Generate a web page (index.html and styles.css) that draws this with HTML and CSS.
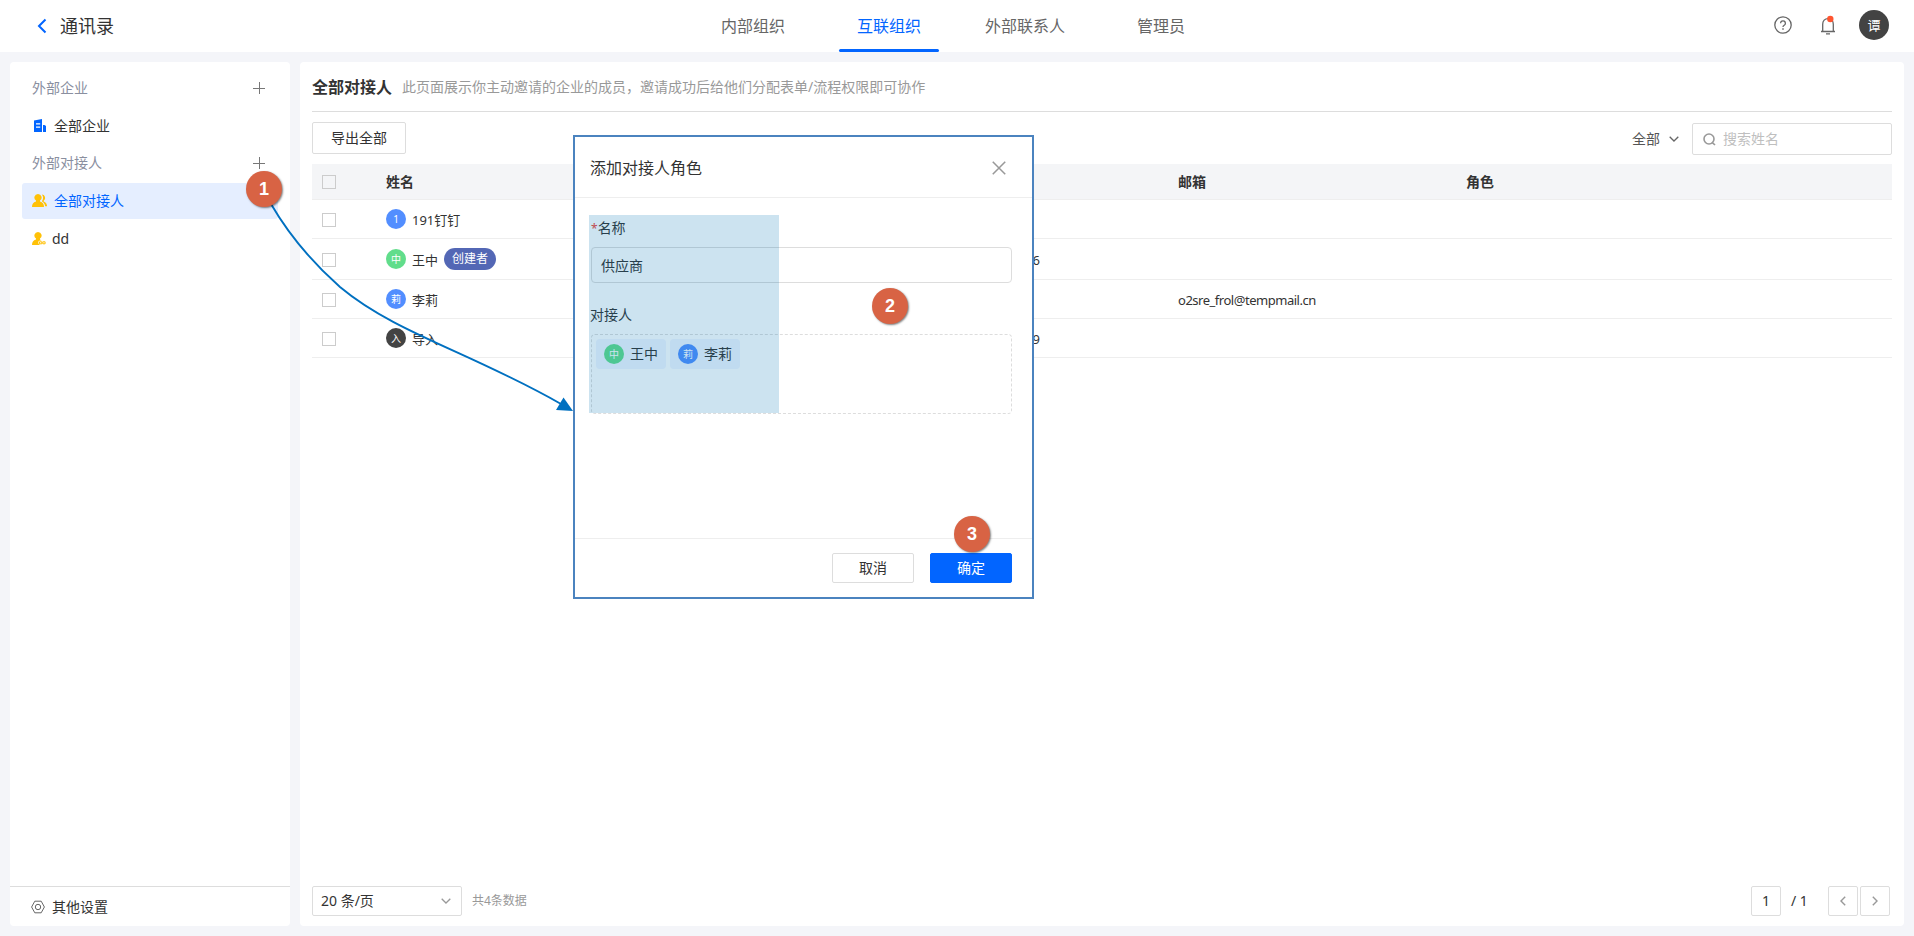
FILE: index.html
```html
<!DOCTYPE html>
<html lang="zh-CN">
<head>
    <meta charset="UTF-8">
    <meta name="viewport" content="width=device-width, initial-scale=1.0">
    <title>通讯录</title>
    <link rel="stylesheet" href="styles.css">
</head>
<body>
    <!-- Header -->
    <header class="header">
        <div class="header-left">
            <svg class="back" width="10" height="16" viewBox="0 0 10 16"><path d="M8.5 1.5L2 8l6.500 6.500" fill="none" stroke="#0265ff" stroke-width="2"/></svg>
            <span class="header-title">通讯录</span>
        </div>
        <nav class="tabs">
            <a class="tab">内部组织</a>
            <a class="tab active">互联组织</a>
            <a class="tab">外部联系人</a>
            <a class="tab">管理员</a>
        </nav>
        <div class="header-right">
            <svg width="18" height="18" viewBox="0 0 18 18" fill="none" stroke="#666">
                <circle cx="9" cy="9" r="8.200" stroke-width="1.300"/>
                <path d="M6.600 7.200a2.400 2.400 0 1 1 3.600 2.100c-.8.5-1.200.8-1.200 1.700" stroke-width="1.300"/>
                <path d="M9 12.200v1.500" stroke-width="1.500"/>
            </svg>
            <svg class="bell" width="16" height="20" viewBox="0 0 16 20" fill="none" stroke="#666" stroke-width="1.300">
                <path d="M1 16.500h14M2.700 16.500V9.200C2.700 5.800 4.800 3.600 8 3.600s5.300 2.200 5.300 5.600v7.300M6 18.800h4"/>
                <circle cx="10.300" cy="4" r="3.200" fill="#ff5530" stroke="none"/>
            </svg>
            <span class="user">谭</span>
        </div>
    </header>

    <div class="page">
        <!-- Sidebar -->
        <aside class="sidebar">
            <div class="side-list">
                <div class="side-label">外部企业
                    <svg width="12" height="12" viewBox="0 0 12 12"><path d="M0 6.500h12M6.500 0v12" stroke="#777" fill="none"/></svg>
                </div>
                <div class="side-item">
                    <svg width="16" height="14" viewBox="0 0 16 14"><path d="M2 1.500L10 0v13H2z" fill="#0265ff"/><path d="M11 6h1.500l1.500 1v6h-3z" fill="#0265ff"/><path d="M4 4.800h4.200M4 8.200h4.200" stroke="#fff" stroke-width="1.300"/></svg>
                    <span>全部企业</span>
                </div>
                <div class="side-label">外部对接人
                    <svg width="12" height="12" viewBox="0 0 12 12"><path d="M0 6.500h12M6.500 0v12" stroke="#777" fill="none"/></svg>
                </div>
                <div class="side-item active">
                    <svg width="16" height="14" viewBox="0 0 16 14" fill="#ffc107"><path d="M6 0a3.600 3.600 0 0 1 2 6.600v1C10.800 8.500 12 10 12 13H0c0-3 1.200-4.500 4-5.400v-1A3.600 3.600 0 0 1 6 0z"/><path d="M9.800.5a3.400 3.400 0 0 1 1.900 6.200v.8c2.100.8 3.300 2.500 3.400 4.800h-1.900c-.3-2.200-1.400-3.700-3.200-4.700V7c1.500-1.600 1.500-4.600-.2-6.500z"/></svg>
                    <span>全部对接人</span>
                </div>
                <div class="side-item role">
                    <svg width="14" height="14" viewBox="0 0 14 14"><path d="M6 0a3.600 3.600 0 0 1 2 6.600v1l1.600.9H8.200c-2.400 0-2.600 3.700 0 4.500H0c0-3 1.200-4.500 4-5.400v-1A3.600 3.600 0 0 1 6 0z" fill="#ffc107"/><path d="M7.500 9.800h2.300v2H7.500zM10.800 9.800h2.300v2h-2.300z" fill="none" stroke="#ffc107"/></svg>
                    <span>dd</span>
                </div>
            </div>
            <div class="side-footer">
                <svg width="14" height="14" viewBox="0 0 14 14" fill="none" stroke="#666"><path d="M3.800 1.200h6.400L13.400 7l-3.200 5.800H3.800L.6 7z"/><circle cx="7" cy="7" r="2.700"/></svg>
                <span>其他设置</span>
            </div>
        </aside>

        <!-- Member list -->
        <main class="main">
            <div class="main-head">
                <h1>全部对接人</h1>
                <p>此页面展示你主动邀请的企业的成员，邀请成功后给他们分配表单/流程权限即可协作</p>
            </div>
            <div class="toolbar">
                <button class="btn export">导出全部</button>
                <div class="filter">全部
                    <svg width="10" height="6" viewBox="0 0 10 6"><path d="M.7.700L5 5 9.300.700" fill="none" stroke="#666" stroke-width="1.300"/></svg>
                </div>
                <div class="search">
                    <svg width="13" height="13" viewBox="0 0 13 13" fill="none" stroke="#999" stroke-width="1.600"><circle cx="6" cy="6" r="5"/><path d="M9 9.300l3 2.700"/></svg>
                    <span>搜索姓名</span>
                </div>
            </div>
            <table>
                <tr>
                    <th class="col-check"><span class="checkbox"></span></th>
                    <th class="col-name">姓名</th>
                    <th class="col-phone"></th>
                    <th class="col-mail">邮箱</th>
                    <th>角色</th>
                </tr>
                <tr>
                    <td><span class="checkbox"></span></td>
                    <td><div class="name"><span class="avatar blue">1</span>191钉钉</div></td>
                    <td></td>
                    <td></td>
                    <td></td>
                </tr>
                <tr class="tall">
                    <td><span class="checkbox"></span></td>
                    <td><div class="name"><span class="avatar green">中</span>王中<span class="tag">创建者</span></div></td>
                    <td class="phone">66</td>
                    <td></td>
                    <td></td>
                </tr>
                <tr>
                    <td><span class="checkbox"></span></td>
                    <td><div class="name"><span class="avatar blue">莉</span>李莉</div></td>
                    <td></td>
                    <td class="mail">o2sre_frol@tempmail.cn</td>
                    <td></td>
                </tr>
                <tr>
                    <td><span class="checkbox"></span></td>
                    <td><div class="name"><span class="avatar dark">入</span>导入</div></td>
                    <td class="phone">09</td>
                    <td></td>
                    <td></td>
                </tr>
            </table>
            <div class="pager">
                <div class="page-size">20 条/页
                    <svg width="10" height="6" viewBox="0 0 10 6"><path d="M.7.700L5 5 9.300.700" fill="none" stroke="#999" stroke-width="1.300"/></svg>
                </div>
                <span class="total">共4条数据</span>
                <span class="page-box">1</span>
                <span class="page-count">/ 1</span>
                <span class="page-box prev"><svg width="6" height="10" viewBox="0 0 6 10"><path d="M5.200.800L1 5l4.200 4.200" fill="none" stroke="#999" stroke-width="1.400"/></svg></span>
                <span class="page-box"><svg width="6" height="10" viewBox="0 0 6 10"><path d="M.8.800L5 5 .8 9.200" fill="none" stroke="#999" stroke-width="1.400"/></svg></span>
            </div>
        </main>
    </div>

    <!-- Add role dialog -->
    <div class="dialog">
        <div class="dialog-head">
            <span>添加对接人角色</span>
            <svg width="14" height="14" viewBox="0 0 13 13"><path d="M.7.700l11.600 11.600M12.300.700L.7 12.300" stroke="#999" stroke-width="1.400" fill="none"/></svg>
        </div>
        <div class="dialog-body">
            <label class="label"><i>*</i>名称</label>
            <div class="input">供应商</div>
            <label class="label second">对接人</label>
            <div class="picker">
                <span class="chip"><span class="avatar green">中</span>王中</span>
                <span class="chip"><span class="avatar strong">莉</span>李莉</span>
            </div>
            <div class="highlight"></div>
        </div>
        <div class="dialog-foot">
            <button class="btn">取消</button>
            <button class="btn primary">确定</button>
        </div>
    </div>

    <!-- Step markers -->
    <svg class="arrow" width="310" height="220" viewBox="270 200 310 220">
        <path d="M271 204C285 228 305 256 340 287C395 333 470 352 561 404" fill="none" stroke="#0070c0" stroke-width="1.900"/>
        <path d="M563.500 397.500L556 410L573 411z" fill="#0070c0"/>
    </svg>
    <div class="step step-1">1</div>
    <div class="step step-2">2</div>
    <div class="step step-3">3</div>
</body>
</html>
```
FILE: styles.css
```css
* {
    box-sizing: border-box;
}
body {
    margin: 0;
    height: 936px;
    overflow: hidden;
    position: relative;
    display: flex;
    flex-direction: column;
    background: #f4f5f9;
    color: #333;
    font-family: "Noto Sans", "Noto Sans CJK SC", sans-serif;
    font-size: 14px;
    line-height: 20px;
}
svg {
    display: block;
    flex: none;
}

/* header */
.header {
    height: 52px;
    flex: none;
    background: #fff;
    display: grid;
    grid-template-columns: 1fr 544px 1fr;
}
.header-left {
    display: flex;
    align-items: center;
    gap: 13px;
    padding-left: 37px;
}
.header-title {
    font-size: 18px;
}
.tabs {
    display: flex;
}
.tab {
    width: 136px;
    display: flex;
    flex-direction: column;
    align-items: center;
    padding-top: 16px;
    font-size: 16px;
    color: #666;
}
.tab.active {
    color: #0265ff;
}
.tab.active::after {
    content: "";
    width: 100px;
    height: 3px;
    margin-top: 13px;
    border-radius: 2px;
    background: #0265ff;
}
.header-right {
    display: flex;
    align-items: center;
    justify-content: flex-end;
    padding: 0 25px 2px 0;
}
.bell {
    margin: 0 23px 0 28px;
}
.user {
    width: 30px;
    height: 30px;
    border-radius: 50%;
    background: #434343;
    color: #fff;
    font-size: 13px;
    line-height: 30px;
    text-align: center;
}

.page {
    flex: 1;
    display: flex;
    gap: 10px;
    padding: 10px;
}

/* sidebar */
.sidebar {
    width: 280px;
    display: flex;
    flex-direction: column;
    background: #fff;
    border-radius: 4px;
}
.side-list {
    flex: 1;
    padding: 8px 12px;
    display: flex;
    flex-direction: column;
    gap: 1.500px;
}
.side-label {
    height: 36px;
    display: flex;
    align-items: center;
    justify-content: space-between;
    padding: 0 13px 0 10px;
    color: #8a8f9f;
}
.side-item {
    height: 36px;
    display: flex;
    align-items: center;
    gap: 6px;
    padding-left: 10px;
    border-radius: 3px;
}
.side-item.active {
    background: #e5eeff;
    color: #0265ff;
}
.side-item.role {
    padding-top: 2px;
}
.side-footer {
    height: 40px;
    border-top: 1px solid #ddd;
    display: flex;
    align-items: center;
    gap: 7px;
    padding-left: 21px;
}

/* main */
.main {
    flex: 1;
    display: flex;
    flex-direction: column;
    padding: 0 12px 10px;
    background: #fff;
    border-radius: 4px;
}
.main-head {
    height: 50px;
    display: flex;
    align-items: center;
    gap: 10px;
    border-bottom: 1px solid #ddd;
}
.main-head h1 {
    margin: 0;
    font-size: 16px;
}
.main-head p {
    margin: 0;
    color: #999;
}
.toolbar {
    display: flex;
    align-items: flex-start;
    padding: 10px 0 9px;
}
.btn {
    border: 1px solid #ddd;
    border-radius: 2px;
    background: #fff;
    color: #333;
    font: inherit;
    padding: 0;
    width: 82px;
    height: 30px;
}
.btn.export {
    width: 94px;
    height: 32px;
}
.btn.primary {
    background: #0265ff;
    border-color: #0265ff;
    color: #fff;
}
.filter {
    height: 33px;
    margin-left: auto;
    margin-right: 13px;
    display: flex;
    align-items: center;
    gap: 9px;
    color: #555;
}
.search {
    width: 200px;
    height: 32px;
    margin-top: 1px;
    border: 1px solid #ddd;
    border-radius: 2px;
    display: flex;
    align-items: center;
    gap: 7px;
    padding-left: 10px;
    color: #bfbfbf;
}
table {
    width: 100%;
    table-layout: fixed;
    border-collapse: separate;
    border-spacing: 0;
    font-size: 13px;
}
th, td {
    height: 39px;
    padding: 2px 0 0;
    text-align: left;
    border-bottom: 1px solid #eee;
}
th {
    height: 36px;
    padding: 0;
    background: #f4f5f7;
    font-size: 14px;
}
.tall td {
    height: 41px;
}
.col-check {
    width: 74px;
}
.col-name {
    width: 504px;
}
.col-phone, .col-mail {
    width: 288px;
}
.checkbox {
    display: block;
    width: 14px;
    height: 14px;
    margin-left: 10px;
    border: 1px solid #ccc;
    background: #fff;
}
th .checkbox {
    background: none;
}
.name {
    display: flex;
    align-items: center;
}
.avatar {
    width: 20px;
    height: 20px;
    margin-right: 6px;
    border-radius: 50%;
    color: #fff;
    font-size: 10px;
    line-height: 20px;
    text-align: center;
}
.name .avatar, .name .tag {
    margin-bottom: 2px;
}
.blue {
    background: #528eff;
}
.strong {
    background: #508fff;
}
.green {
    background: #61dd8b;
}
.dark {
    background: #434343;
}
.tag {
    width: 52px;
    height: 22px;
    margin-left: 6px;
    border-radius: 11px;
    background: #5367b5;
    color: #fff;
    font-size: 12px;
    line-height: 22px;
    text-align: center;
}
.phone {
    padding-left: 135px;
}
.mail {
    letter-spacing: -0.480px;
}
.pager {
    margin-top: auto;
    display: flex;
    align-items: center;
}
.page-size {
    width: 150px;
    height: 30px;
    border: 1px solid #ddd;
    border-radius: 2px;
    display: flex;
    align-items: center;
    justify-content: space-between;
    padding: 0 10px 0 8px;
}
.total {
    margin: 0 auto 0 10px;
    font-size: 12px;
    color: #999;
}
.page-box {
    width: 30px;
    height: 30px;
    margin-right: 2px;
    border: 1px solid #ddd;
    border-radius: 2px;
    display: flex;
    align-items: center;
    justify-content: center;
}
.page-count {
    width: 37px;
    margin: 0 0 0 8px;
}

/* dialog */
.dialog {
    position: absolute;
    left: 573px;
    top: 135px;
    width: 461px;
    height: 464px;
    border: 2px solid #4b83bf;
    background: #fff;
    display: flex;
    flex-direction: column;
}
.dialog-head {
    height: 61px;
    border-bottom: 1px solid #eee;
    display: flex;
    align-items: center;
    justify-content: space-between;
    padding: 2px 26px 0 15px;
    font-size: 16px;
}
.dialog-body {
    flex: 1;
    position: relative;
    padding: 20px 20px 0 16px;
}
.label {
    display: block;
    height: 20px;
    margin-bottom: 9px;
}
.label i {
    color: #f04134;
    font-style: normal;
    font-size: 12px;
}
.label.second {
    margin: 22px 0 9px -1px;
}
.input {
    height: 36px;
    border: 1px solid #ddd;
    border-radius: 4px;
    padding: 0 9px;
    line-height: 36px;
}
.picker {
    height: 80px;
    border: 1px dashed #ddd;
    border-radius: 4px;
    display: flex;
    align-items: flex-start;
    gap: 4px;
    padding: 4px;
}
.chip {
    width: 70px;
    height: 30px;
    border-radius: 4px;
    background: #f0f5ff;
    display: flex;
    align-items: center;
    padding-left: 8px;
}
.highlight {
    position: absolute;
    left: 14px;
    top: 17px;
    width: 190px;
    height: 198px;
    background: rgba(0, 114, 180, 0.2);
}
.dialog-foot {
    height: 59px;
    border-top: 1px solid #eee;
    display: flex;
    justify-content: flex-end;
    gap: 16px;
    padding: 14px 20px 0 0;
}

/* step markers */
.arrow {
    position: absolute;
    left: 270px;
    top: 200px;
}
.step {
    position: absolute;
    width: 36px;
    height: 36px;
    border-radius: 50%;
    background: #d86344;
    box-shadow: 1px 1px 2px rgba(0, 0, 0, 0.5);
    color: #fff;
    font: bold 18px/36px "Liberation Sans", sans-serif;
    text-align: center;
}
.step-1 {
    left: 246px;
    top: 171px;
}
.step-2 {
    left: 872px;
    top: 288px;
}
.step-3 {
    left: 954px;
    top: 516px;
}
```
